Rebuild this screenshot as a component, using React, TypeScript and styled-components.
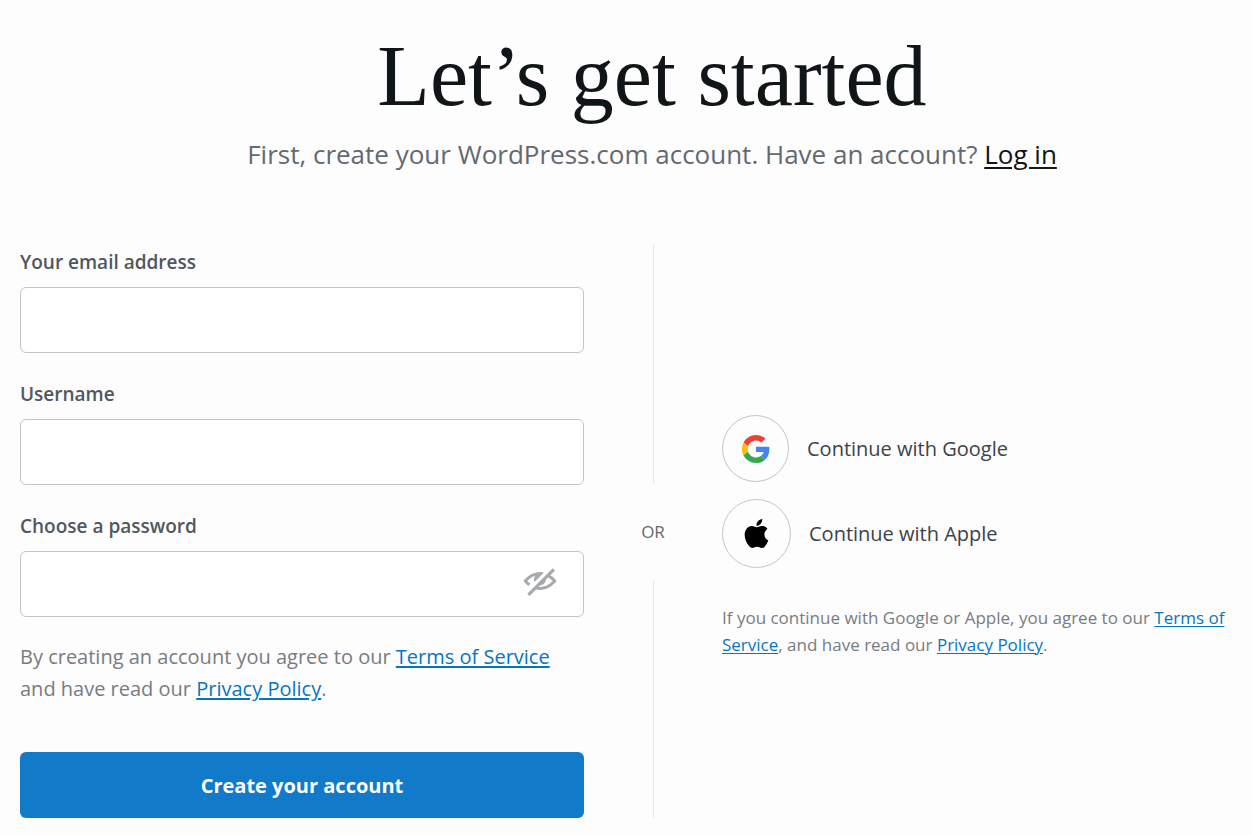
import React, { useState } from "react";
import styled, { createGlobalStyle } from "styled-components";

const GlobalStyle = createGlobalStyle`
  *, *::before, *::after { box-sizing: border-box; }
  body {
    margin: 0;
    background: #fdfdfd;
    color: #646970;
    font-family: "Open Sans", "Noto Sans", sans-serif;
  }
`;

const Page = styled.main`
  padding: 32px 20px 16px;
`;

const Header = styled.header`
  padding-left: 52px;
  margin-bottom: 72px;
  text-align: center;
`;

const Title = styled.h1`
  margin: 0 0 15px;
  color: #101517;
  font-family: "Liberation Serif", serif;
  font-size: 86px;
  font-weight: 400;
  line-height: 88px;
`;

const Subtitle = styled.p`
  margin: 0;
  font-size: 26px;
  line-height: 38px;
`;

const LoginLink = styled.a`
  color: #101517;
  text-decoration-thickness: 2px;
  text-underline-offset: 3px;
`;

const Columns = styled.div`
  display: grid;
  grid-template-columns: 564fr 138px 510fr;
`;

const Form = styled.form`
  display: flex;
  flex-direction: column;
  gap: 24px;
`;

const Field = styled.div`
  display: flex;
  flex-direction: column;
  gap: 8px;
`;

const Label = styled.label`
  color: #50575e;
  font-size: 19px;
  font-weight: 600;
  line-height: 34px;
`;

const InputWrap = styled.div`
  position: relative;
  display: flex;
`;

const Input = styled.input<{ $withToggle?: boolean }>`
  width: 100%;
  height: 66px;
  padding: 0 ${(p) => (p.$withToggle ? 72 : 20)}px 0 20px;
  border: 1px solid #c3c4c7;
  border-radius: 6px;
  background: #fff;
  color: #2c3338;
  font-family: inherit;
  font-size: 20px;
`;

const ToggleButton = styled.button`
  position: absolute;
  top: 12px;
  right: 26px;
  display: flex;
  padding: 0;
  border: 0;
  background: none;
  color: #a7aaad;
  cursor: pointer;
`;

const Terms = styled.p<{ $small?: boolean }>`
  margin: 0;
  color: #787c82;
  font-size: ${(p) => (p.$small ? 17 : 20)}px;
  line-height: ${(p) => (p.$small ? 27 : 32)}px;

  a {
    color: #0675c4;
    text-decoration-thickness: ${(p) => (p.$small ? 1 : 2)}px;
    text-underline-offset: 2px;
  }
`;

const SubmitButton = styled.button`
  height: 66px;
  margin-top: 23px;
  border: 0;
  border-radius: 6px;
  background: #117ac9;
  color: #fff;
  font-family: inherit;
  font-size: 20px;
  font-weight: 700;
  cursor: pointer;
`;

const Divider = styled.div`
  display: flex;
  flex-direction: column;
  align-items: center;

  &::before, &::after {
    content: "";
    flex: 1;
    width: 1px;
    background: #e6e7e8;
  }
`;

const DividerText = styled.span`
  padding: 37px 0;
  font-size: 17px;
  line-height: 24px;
`;

const Social = styled.section`
  display: flex;
  flex-direction: column;
  justify-content: center;
  align-items: flex-start;
  gap: 17px;
  padding-top: 10px;

  ${Terms} {
    margin-top: 19px;
  }
`;

const SocialButton = styled.button`
  display: flex;
  align-items: center;
  gap: 18px;
  padding: 0;
  border: 0;
  background: none;
  color: #3c434a;
  font-family: inherit;
  font-size: 20px;
  cursor: pointer;
`;

const IconCircle = styled.span<{ $size: number }>`
  display: flex;
  align-items: center;
  justify-content: center;
  width: ${(p) => p.$size}px;
  height: ${(p) => p.$size}px;
  border: 1px solid #c3c4c7;
  border-radius: 50%;
`;

const HiddenIcon = () => (
  <svg width="36" height="36" viewBox="0 0 24 24" fill="currentColor" aria-hidden="true">
    <path d="M1 12s4.188-6 11-6c.947 0 1.839.121 2.678.322L8.36 12.64A3.96 3.96 0 0 1 8 11c0-.937.335-1.787.875-2.469-2.483.803-4.389 2.4-5.375 3.469.489.533 1.219 1.196 2.168 1.815l-1.444 1.444C2.171 13.736 1 12 1 12z" />
    <path
      fillRule="evenodd"
      d="M23 12s-4.188 6-11 6c-.946 0-1.836-.124-2.676-.323L5 22l-1.5-1.5 17-17L22 5l-3.147 3.147C21.656 9.68 23 12 23 12zM20.5 12c-.75-.83-1.9-1.8-3.1-2.4l-1.43 1.43c-.17 2.17-1.87 3.77-4.07 3.94l-.97.97c.36.04.7.06 1.07.06 4.1 0 7.2-2.6 8.5-4z"
    />
  </svg>
);

const GoogleIcon = () => (
  <svg width="28" height="28" viewBox="0 0 48 48" aria-hidden="true">
    <path fill="#EA4335" d="M24 9.5c3.54 0 6.71 1.22 9.21 3.6l6.85-6.85C35.9 2.38 30.47 0 24 0 14.62 0 6.51 5.38 2.56 13.22l7.98 6.19C12.43 13.72 17.74 9.5 24 9.5z" />
    <path fill="#4285F4" d="M46.98 24.55c0-1.57-.15-3.09-.38-4.55H24v9.02h12.94c-.58 2.96-2.26 5.48-4.78 7.18l7.73 6c4.51-4.18 7.09-10.36 7.09-17.65z" />
    <path fill="#FBBC05" d="M10.53 28.59c-.48-1.45-.76-2.99-.76-4.59s.27-3.14.76-4.59l-7.98-6.19C.92 16.46 0 20.12 0 24c0 3.88.92 7.54 2.56 10.78l7.97-6.19z" />
    <path fill="#34A853" d="M24 48c6.48 0 11.93-2.13 15.89-5.81l-7.73-6c-2.15 1.45-4.92 2.3-8.16 2.3-6.26 0-11.57-4.22-13.47-9.91l-7.98 6.19C6.51 42.62 14.62 48 24 48z" />
  </svg>
);

const AppleIcon = () => (
  <svg width="29" height="29" viewBox="0 0 24 24" fill="#000" aria-hidden="true">
    <path d="M12.152 6.896c-.948 0-2.415-1.078-3.96-1.04-2.04.027-3.91 1.183-4.961 3.014-2.117 3.675-.546 9.103 1.519 12.09 1.013 1.454 2.208 3.09 3.792 3.039 1.52-.065 2.09-.987 3.935-.987 1.831 0 2.35.987 3.96.948 1.637-.026 2.676-1.48 3.676-2.948 1.156-1.688 1.636-3.325 1.662-3.415-.039-.013-3.182-1.221-3.22-4.857-.026-3.04 2.48-4.494 2.597-4.559-1.429-2.09-3.623-2.324-4.39-2.376-2-.156-3.675 1.09-4.61 1.09zM15.53 3.83c.843-1.012 1.4-2.427 1.245-3.83-1.207.052-2.662.805-3.532 1.818-.78.896-1.454 2.338-1.273 3.714 1.338.104 2.715-.688 3.559-1.701" />
  </svg>
);

export default function App() {
  const [visible, setVisible] = useState(false);

  return (
    <>
      <GlobalStyle />
      <Page>
        <Header>
          <Title>Let’s get started</Title>
          <Subtitle>
            First, create your WordPress.com account. Have an account?{" "}
            <LoginLink href="#login">Log in</LoginLink>
          </Subtitle>
        </Header>
        <Columns>
          <Form onSubmit={(e) => e.preventDefault()}>
            <Field>
              <Label htmlFor="email">Your email address</Label>
              <Input id="email" type="email" />
            </Field>
            <Field>
              <Label htmlFor="username">Username</Label>
              <Input id="username" type="text" />
            </Field>
            <Field>
              <Label htmlFor="password">Choose a password</Label>
              <InputWrap>
                <Input id="password" type={visible ? "text" : "password"} $withToggle />
                <ToggleButton
                  type="button"
                  aria-label="Toggle password visibility"
                  onClick={() => setVisible(!visible)}
                >
                  <HiddenIcon />
                </ToggleButton>
              </InputWrap>
            </Field>
            <Terms>
              By creating an account you agree to our <a href="#terms">Terms of Service</a> and have
              read our <a href="#privacy">Privacy Policy</a>.
            </Terms>
            <SubmitButton type="submit">Create your account</SubmitButton>
          </Form>
          <Divider>
            <DividerText>OR</DividerText>
          </Divider>
          <Social>
            <SocialButton type="button">
              <IconCircle $size={67}>
                <GoogleIcon />
              </IconCircle>
              Continue with Google
            </SocialButton>
            <SocialButton type="button">
              <IconCircle $size={69}>
                <AppleIcon />
              </IconCircle>
              Continue with Apple
            </SocialButton>
            <Terms $small>
              If you continue with Google or Apple, you agree to our <a href="#terms">Terms of Service</a>,
              and have read our <a href="#privacy">Privacy Policy</a>.
            </Terms>
          </Social>
        </Columns>
      </Page>
    </>
  );
}
